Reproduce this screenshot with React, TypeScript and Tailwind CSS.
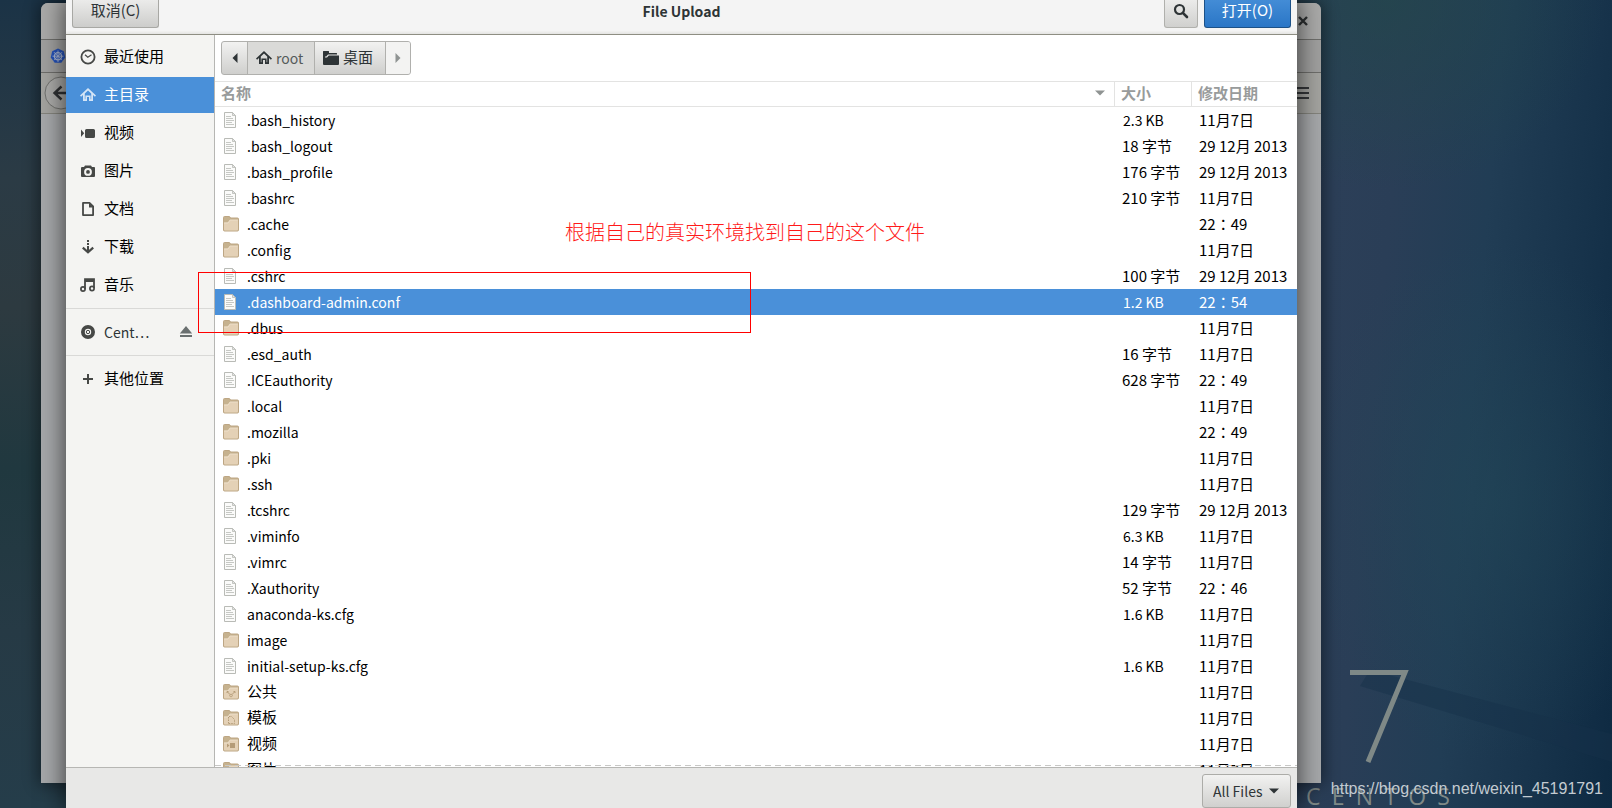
import type { ReactNode } from "react";

type FileKind = "doc" | "folder" | "public" | "template" | "video" | "picture";

interface FileRow {
  name: string;
  kind: FileKind;
  size: string;
  date: string;
  selected?: boolean;
}

const files: FileRow[] = [
  { name: ".bash_history", kind: "doc", size: "2.3 KB", date: "11月7日" },
  { name: ".bash_logout", kind: "doc", size: "18 字节", date: "29 12月 2013" },
  { name: ".bash_profile", kind: "doc", size: "176 字节", date: "29 12月 2013" },
  { name: ".bashrc", kind: "doc", size: "210 字节", date: "11月7日" },
  { name: ".cache", kind: "folder", size: "", date: "22：49" },
  { name: ".config", kind: "folder", size: "", date: "11月7日" },
  { name: ".cshrc", kind: "doc", size: "100 字节", date: "29 12月 2013" },
  { name: ".dashboard-admin.conf", kind: "doc", size: "1.2 KB", date: "22：54", selected: true },
  { name: ".dbus", kind: "folder", size: "", date: "11月7日" },
  { name: ".esd_auth", kind: "doc", size: "16 字节", date: "11月7日" },
  { name: ".ICEauthority", kind: "doc", size: "628 字节", date: "22：49" },
  { name: ".local", kind: "folder", size: "", date: "11月7日" },
  { name: ".mozilla", kind: "folder", size: "", date: "22：49" },
  { name: ".pki", kind: "folder", size: "", date: "11月7日" },
  { name: ".ssh", kind: "folder", size: "", date: "11月7日" },
  { name: ".tcshrc", kind: "doc", size: "129 字节", date: "29 12月 2013" },
  { name: ".viminfo", kind: "doc", size: "6.3 KB", date: "11月7日" },
  { name: ".vimrc", kind: "doc", size: "14 字节", date: "11月7日" },
  { name: ".Xauthority", kind: "doc", size: "52 字节", date: "22：46" },
  { name: "anaconda-ks.cfg", kind: "doc", size: "1.6 KB", date: "11月7日" },
  { name: "image", kind: "folder", size: "", date: "11月7日" },
  { name: "initial-setup-ks.cfg", kind: "doc", size: "1.6 KB", date: "11月7日" },
  { name: "公共", kind: "public", size: "", date: "11月7日" },
  { name: "模板", kind: "template", size: "", date: "11月7日" },
  { name: "视频", kind: "video", size: "", date: "11月7日" },
  { name: "图片", kind: "picture", size: "", date: "11月7日" },
];

const isLatin = (text: string) => /^[\x20-\x7e]*$/.test(text);

function Icon({ children }: { children: ReactNode }) {
  return (
    <svg width="16" height="16" viewBox="0 0 16 16" fill="currentColor" className="block shrink-0" aria-hidden="true">
      {children}
    </svg>
  );
}

const HomeIcon = () => (
  <Icon>
    <path d="M8 1 0 8.600l1.100 1.100L3 8v6h4v-4h2v4h4V8l1.900 1.700L16 8.600zM8 3.600l3.200 3V12.300H10.600V8.500H5.400v3.800H4.800V6.600z" />
  </Icon>
);

const ClockIcon = () => (
  <Icon>
    <circle cx="8" cy="8" r="6.600" fill="none" stroke="currentColor" strokeWidth="1.800" />
    <path d="M5 5.800 7.800 8.300 11.500 5.800" fill="none" stroke="currentColor" strokeWidth="1.200" />
  </Icon>
);

const VideoIcon = () => (
  <Icon>
    <path d="M5 5.500Q5 4 6.500 4H13.500Q15 4 15 5.500V11.500Q15 13 13.500 13H6.500Q5 13 5 11.500zM1 4.500 4.200 8.200 1 12z" />
  </Icon>
);

const CameraIcon = () => (
  <Icon>
    <path
      fillRule="evenodd"
      d="M5 2.500h6L12 4h2.200Q15 4 15 5v8q0 1-1 1H2q-1 0-1-1V5q0-1 1-1h2zM8 5a3.900 3.900 0 1 0 0 7.800A3.900 3.900 0 0 0 8 5zm0 2a1.900 1.900 0 1 1 0 3.800A1.900 1.900 0 0 1 8 7z"
    />
  </Icon>
);

const DocumentIcon = () => (
  <Icon>
    <path d="M3 1.900H9.500L13.100 5.500V14.100H3z" fill="none" stroke="currentColor" strokeWidth="1.800" strokeLinejoin="round" />
    <path d="M9 2v4.500h4z" />
  </Icon>
);

const DownloadIcon = () => (
  <Icon>
    <path d="M7 1h2v2H7zM7 4h2v2H7zM7 7h2v5H7z" />
    <path d="M2.800 8.600 8 13.300 13.200 8.600" fill="none" stroke="currentColor" strokeWidth="2.200" />
  </Icon>
);

const MusicIcon = () => (
  <Icon>
    <path d="M5 12V2.200H14V11" fill="none" stroke="currentColor" strokeWidth="1.800" />
    <path d="M5 3h9v2H5z" />
    <circle cx="3" cy="12" r="2.100" fill="none" stroke="currentColor" strokeWidth="1.700" />
    <circle cx="12" cy="11.500" r="2.100" fill="none" stroke="currentColor" strokeWidth="1.700" />
  </Icon>
);

const DiscIcon = () => (
  <Icon>
    <path fillRule="evenodd" d="M8 1a7 7 0 1 0 0 14A7 7 0 0 0 8 1zm0 3.800a3.200 3.200 0 1 1 0 6.400 3.200 3.200 0 0 1 0-6.400z" />
    <circle cx="8" cy="8" r="1.700" fill="none" stroke="currentColor" strokeWidth="1" />
  </Icon>
);

const PlusIcon = () => (
  <Icon>
    <path d="M7 3h2v4h4v2H9v4H7V9H3V7h4z" />
  </Icon>
);

const EjectIcon = () => (
  <Icon>
    <path d="M8 2 14.200 9.500H1.800zM2 11h12v2H2z" />
  </Icon>
);

const FolderSymbol = () => (
  <Icon>
    <path d="M0 1.500Q0 1 .5 1H5.500Q6 1 6 1.500V3H13.500Q14 3 14 3.500V4.500H5L3.200 6.500H2V15H1Q0 15 0 14z" />
    <path d="M2 7.500H4L5.800 5.500H16V14Q16 15 15 15H2z" />
  </Icon>
);

function FileIcon({ kind }: { kind: FileKind }) {
  if (kind === "doc") {
    return (
      <svg width="16" height="16" viewBox="0 0 16 16" className="block shrink-0" aria-hidden="true">
        <path d="M1.500.5H9.500L12.500 3.500V15.500H1.500z" fill="#fbfbfa" stroke="#b9bbb6" />
        <path d="M9.500.5V3.500H12.500z" fill="#e4e4e2" stroke="#b9bbb6" strokeWidth=".8" />
        <path d="M3 4.500H8M3 6.500H10M3 8.500H11M3 10.500H9M3 12.500H11" stroke="#c6c8c4" />
      </svg>
    );
  }
  return (
    <svg width="16" height="16" viewBox="0 0 16 16" className="block shrink-0" aria-hidden="true">
      <path d="M.5 14V1.500Q.5.5 1.500.5H6Q7 .5 7.500 2H14.500Q15.500 2 15.500 3V14Q15.500 15 14.500 15H1.500Q.5 15 .5 14z" fill="#c6b28f" stroke="#bda684" />
      <path d="M1 7Q1 6.500 1.600 6.500H4.500Q5.200 6.500 5.800 5.600L6.500 4.600Q7 4 7.600 4H14.400Q15 4 15 4.600V13.500Q15 14.500 14 14.500H2Q1 14.500 1 13.500z" fill="#e4d1b6" />
      <path d="M1 7H5L7 4H15" fill="none" stroke="#f0e3d0" strokeWidth=".8" />
      {kind === "public" && (
        <path d="M4 9V7.500H5.500M12 9V7.500H10.500M4.500 8 7 10.500M11.500 8 9 10.500M8 10.200a1.300 1.300 0 1 0 .01 0" fill="none" stroke="#b59c78" />
      )}
      {kind === "template" && <path d="M5.500 13.500V6.500H8.500L11.500 9.500V13.500z" fill="none" stroke="#b59c78" strokeDasharray="1.500 1" />}
      {kind === "video" && <path d="M7 7h5v5H7zM4 7.500 6.500 9.500 4 11.500z" fill="#b59c78" />}
      {kind === "picture" && <path d="M4 8h8v5H4z" fill="#b59c78" />}
    </svg>
  );
}

interface Place {
  label: string;
  icon: ReactNode;
  active?: boolean;
}

const places: Place[] = [
  { label: "最近使用", icon: <ClockIcon /> },
  { label: "主目录", icon: <HomeIcon />, active: true },
  { label: "视频", icon: <VideoIcon /> },
  { label: "图片", icon: <CameraIcon /> },
  { label: "文档", icon: <DocumentIcon /> },
  { label: "下载", icon: <DownloadIcon /> },
  { label: "音乐", icon: <MusicIcon /> },
];

function PlaceButton({ label, icon, active }: Place) {
  return (
    <button
      type="button"
      className={
        active
          ? "flex h-9 w-full items-center gap-2 bg-[#4a90d9] px-[14px] text-left text-white"
          : "flex h-9 w-full items-center gap-2 px-[14px] text-left text-black"
      }
    >
      <span className={active ? "text-[#d5e5f6]" : "text-[#464846]"}>{icon}</span>
      <span className="pb-[2px]">{label}</span>
    </button>
  );
}

function Wallpaper() {
  return (
    <div className="absolute inset-0 overflow-hidden bg-[linear-gradient(180deg,#1b3346_0%,#2b3b45_22%,#2d3a40_38%,#20383f_58%,#263a45_78%,#253d4a_100%)]">
      <div className="absolute inset-y-0 right-0 w-[322px] bg-[radial-gradient(ellipse_220px_190px_at_30%_0%,rgba(32,72,72,0.6)_0%,rgba(32,72,72,0)_100%),radial-gradient(ellipse_190px_260px_at_62%_62%,rgba(34,72,88,0.55)_0%,rgba(34,72,88,0)_100%),linear-gradient(95deg,#2e4059_0%,#2a3e57_30%,#213d55_55%,#17334b_80%,#0e2a42_100%)]">
        <svg className="absolute inset-x-0 bottom-0" width="322" height="150" viewBox="0 0 322 150" aria-hidden="true">
          <path d="M80 12 322 76V104L70 28z" fill="#173049" opacity=".45" />
          <path d="M60 14.500H115L78 104" fill="none" stroke="#7f8987" strokeWidth="5" />
        </svg>
      </div>
    </div>
  );
}

function BrowserWindow() {
  return (
    <div className="absolute top-[3px] right-[291px] bottom-[25px] left-[41px] flex flex-col overflow-hidden rounded-t-[7px] bg-[#a5a7a9] shadow-[0_0_16px_2px_rgba(0,0,0,0.45)]">
      <div className="flex h-[37px] items-center justify-end border-b border-[#6d6d6a] bg-[#a9a9a8] pr-3">
        <svg width="12" height="12" viewBox="0 0 12 12" aria-hidden="true">
          <path d="M2 2 10 10M10 2 2 10" stroke="#2c2f30" strokeWidth="2.400" />
        </svg>
      </div>
      <div className="flex h-[33px] items-center border-b border-[#6d6d6a] bg-[#9f9f9e] pl-[9px]">
        <svg width="16" height="16" viewBox="0 0 16 16" aria-hidden="true">
          <path d="M8 .5 13.800 3.200 15.300 9.400 11.300 14.800H4.700L.7 9.400 2.200 3.200z" fill="#2552b8" />
          <circle cx="8" cy="8.200" r="3.600" fill="none" stroke="#a8b6d2" strokeWidth="1.300" />
          <path d="M8 2.500V14M2.500 8.200H13.500M4 4.200 12 12.200M12 4.200 4 12.200" stroke="#a8b6d2" strokeWidth=".9" />
        </svg>
      </div>
      <div className="flex h-[41px] items-center justify-between border-b border-[#83837c] bg-[#a3a39f] pr-3 pl-[3px]">
        <svg width="34" height="34" viewBox="0 0 34 34" aria-hidden="true">
          <circle cx="17" cy="17" r="16" fill="#a9a9a7" stroke="#70716e" />
          <path d="M26 17H10M17.500 10.500 10.500 17 17.500 23.500" fill="none" stroke="#2f3133" strokeWidth="2.400" />
        </svg>
        <svg width="14" height="14" viewBox="0 0 14 14" aria-hidden="true">
          <path d="M0 2H14M0 7H14M0 12H14" stroke="#343638" strokeWidth="2" />
        </svg>
      </div>
    </div>
  );
}

function PathBar() {
  return (
    <nav
      aria-label="路径"
      className="flex h-[34px] w-fit overflow-hidden rounded-[3px] border border-[#b0b0ad] bg-[linear-gradient(#f2f2f1,#cfcfcd)] text-[#2e3436]"
    >
      <button type="button" aria-label="后退" className="flex w-[26px] items-center justify-center border-r border-[#b0b0ad]">
        <svg width="6" height="10" viewBox="0 0 6 10" aria-hidden="true">
          <path d="M5.500 0V10L.5 5z" fill="#2e3436" />
        </svg>
      </button>
      <button type="button" className="flex w-[67px] items-center gap-1 border-r border-[#b0b0ad] bg-[#dadad8] pl-2">
        <HomeIcon />
        <span className="text-sm text-[#555a5a]">root</span>
      </button>
      <button type="button" className="flex w-[71px] items-center gap-1 border-r border-[#b0b0ad] pl-2">
        <FolderSymbol />
        <span className="pb-[2px]">桌面</span>
      </button>
      <button type="button" aria-label="前进" disabled className="flex w-6 items-center justify-center bg-[#f3f3f2]">
        <svg width="6" height="10" viewBox="0 0 6 10" aria-hidden="true">
          <path d="M.5 0V10L5.500 5z" fill="#8f9392" />
        </svg>
      </button>
    </nav>
  );
}

function FileTable() {
  return (
    <table className="w-full table-fixed border-separate border-spacing-0">
      <colgroup>
        <col />
        <col className="w-[77px]" />
        <col className="w-[106px]" />
      </colgroup>
      <thead>
        <tr className="text-left leading-5 text-[#989b9b]">
          <th scope="col" className="h-[26px] border-y border-[#e3e3e2] p-0 pb-[2px] pl-[6px] font-bold">
            <span className="flex items-center justify-between pr-[9px]">
              名称
              <svg width="10" height="6" viewBox="0 0 10 6" aria-hidden="true">
                <path d="M0 .5H10L5 5.500z" fill="#8f9392" />
              </svg>
            </span>
          </th>
          <th scope="col" className="h-[26px] border-y border-l border-[#e3e3e2] p-0 pb-[2px] pl-[6px] font-bold">大小</th>
          <th scope="col" className="h-[26px] border-y border-l border-[#e3e3e2] p-0 pb-[2px] pl-[6px] font-bold">修改日期</th>
        </tr>
      </thead>
      <tbody>
        {files.map((file) => (
          <tr key={file.name} className={file.selected ? "bg-[#4a90d9] text-white" : "text-black"}>
            <td className="h-[26px] p-0 pl-2">
              <span className="flex items-center gap-2">
                <FileIcon kind={file.kind} />
                <span className={isLatin(file.name) ? "pb-px text-sm leading-5" : "pb-[2px]"}>{file.name}</span>
              </span>
            </td>
            <td className={isLatin(file.size) ? "h-[26px] p-0 pb-px pl-[9px] text-sm whitespace-nowrap" : "h-[26px] p-0 pb-px pl-2 whitespace-nowrap"}>
              {file.size}
            </td>
            <td className="h-[26px] p-0 pb-px pl-2 font-['Noto_Sans_CJK_TC',sans-serif] whitespace-nowrap">{file.date}</td>
          </tr>
        ))}
      </tbody>
    </table>
  );
}

function UploadDialog() {
  return (
    <section
      aria-label="File Upload"
      className="absolute inset-y-0 right-[315px] left-[66px] flex flex-col bg-white text-[15px] leading-5 shadow-[0_0_22px_2px_rgba(0,0,0,0.6)]"
    >
      <header className="grid h-[35px] shrink-0 grid-cols-[1fr_auto_1fr] items-start border-b border-[#8e8e83] bg-[linear-gradient(#f4f4f4_90%,#e4e4e2)] px-[6px]">
        <button
          type="button"
          className="flex h-7 w-[87px] items-center justify-center rounded-b-[3px] border border-t-0 border-[#a8a8a4] bg-[linear-gradient(#ebebea,#cdcdcb)] pb-2 text-[#2e3436]"
        >
          取消(C)
        </button>
        <h1 className="text-sm leading-[22px] font-bold text-[#2e3436]">File Upload</h1>
        <div className="flex justify-end gap-[6px]">
          <button
            type="button"
            aria-label="搜索"
            className="flex h-7 w-[34px] items-center justify-center rounded-b-[3px] border border-t-0 border-[#b0b0ac] bg-[linear-gradient(#ebebea,#d0d0ce)] pb-[6px]"
          >
            <svg width="16" height="16" viewBox="0 0 16 16" aria-hidden="true">
              <circle cx="6.500" cy="6.500" r="4.500" fill="none" stroke="#2e3436" strokeWidth="2.200" />
              <path d="M9.800 9.800 14 14" stroke="#2e3436" strokeWidth="2.600" strokeLinecap="round" />
            </svg>
          </button>
          <button
            type="button"
            className="flex h-7 w-[87px] items-center justify-center rounded-b-[3px] border border-t-0 border-[#1c5187] bg-[linear-gradient(#438cd6,#2a76c6)] pb-2 text-white"
          >
            打开(O)
          </button>
        </div>
      </header>

      <div className="flex min-h-0 flex-1">
        <aside className="w-[149px] shrink-0 border-r border-[#b6b6b3] bg-[#f4f4f2] pt-1">
          <div className="flex flex-col gap-[2px] pb-[5px]">
            {places.map((place) => (
              <PlaceButton key={place.label} {...place} />
            ))}
          </div>
          <div className="flex items-center border-y border-[#d9d9d7] py-[5px] text-[#2e3436]">
            <button type="button" className="flex h-9 flex-1 items-center gap-2 pl-[14px] text-left text-sm">
              <span className="text-[#464846]">
                <DiscIcon />
              </span>
              Cent⋯
            </button>
            <button type="button" aria-label="弹出" className="mr-5 text-[#6a7070]">
              <EjectIcon />
            </button>
          </div>
          <div className="pt-[5px]">
            <PlaceButton label="其他位置" icon={<PlusIcon />} />
          </div>
        </aside>

        <div className="relative flex min-w-0 flex-1 flex-col overflow-hidden">
          <div className="shrink-0 px-[6px] py-[6px]">
            <PathBar />
          </div>
          <div className="min-h-0 flex-1 overflow-hidden">
            <FileTable />
          </div>
          <div className="absolute inset-x-0 bottom-[1px] h-px bg-[repeating-linear-gradient(90deg,#c8c8c6_0_6px,transparent_6px_10px)]" />
        </div>
      </div>

      <footer className="flex h-[41px] shrink-0 justify-end border-t border-[#b6b6b3] bg-[#e8e8e7] px-[6px] pt-[6px]">
        <div className="relative">
          <select
            aria-label="文件类型"
            className="h-[34px] w-[89px] appearance-none rounded-[3px] border border-[#acaca8] bg-[linear-gradient(#f2f2f1,#d0d0ce)] pl-[10px] text-sm text-[#2e3436]"
          >
            <option>All Files</option>
          </select>
          <svg width="10" height="6" viewBox="0 0 10 6" className="pointer-events-none absolute top-[14px] right-3" aria-hidden="true">
            <path d="M0 .5H10L5 5.500z" fill="#2e3436" />
          </svg>
        </div>
      </footer>
    </section>
  );
}

export default function App() {
  return (
    <main className="relative h-screen min-h-[480px] overflow-hidden font-['Noto_Sans_CJK_SC',sans-serif]">
      <Wallpaper />
      <div aria-hidden="true" className="absolute right-[162px] bottom-0 flex w-[144px] justify-between font-['Open_Sans',sans-serif] text-[23px] leading-[24px] text-[#7f8987]">
        {["C", "E", "N", "T", "O", "S"].map((letter) => (
          <span key={letter}>{letter}</span>
        ))}
      </div>
      <BrowserWindow />
      <UploadDialog />
      <p className="absolute top-[222px] left-[565px] text-xl leading-5 font-light whitespace-nowrap text-[#ff1a1a]">
        根据自己的真实环境找到自己的这个文件
      </p>
      <div className="absolute top-[272px] left-[198px] h-[61px] w-[553px] border border-[#ff0000]" />
      <p className="absolute right-[9px] bottom-[9px] font-['Liberation_Sans',sans-serif] text-base leading-5 text-[#c3cbd1]">
        https://blog.csdn.net/weixin_45191791
      </p>
    </main>
  );
}
